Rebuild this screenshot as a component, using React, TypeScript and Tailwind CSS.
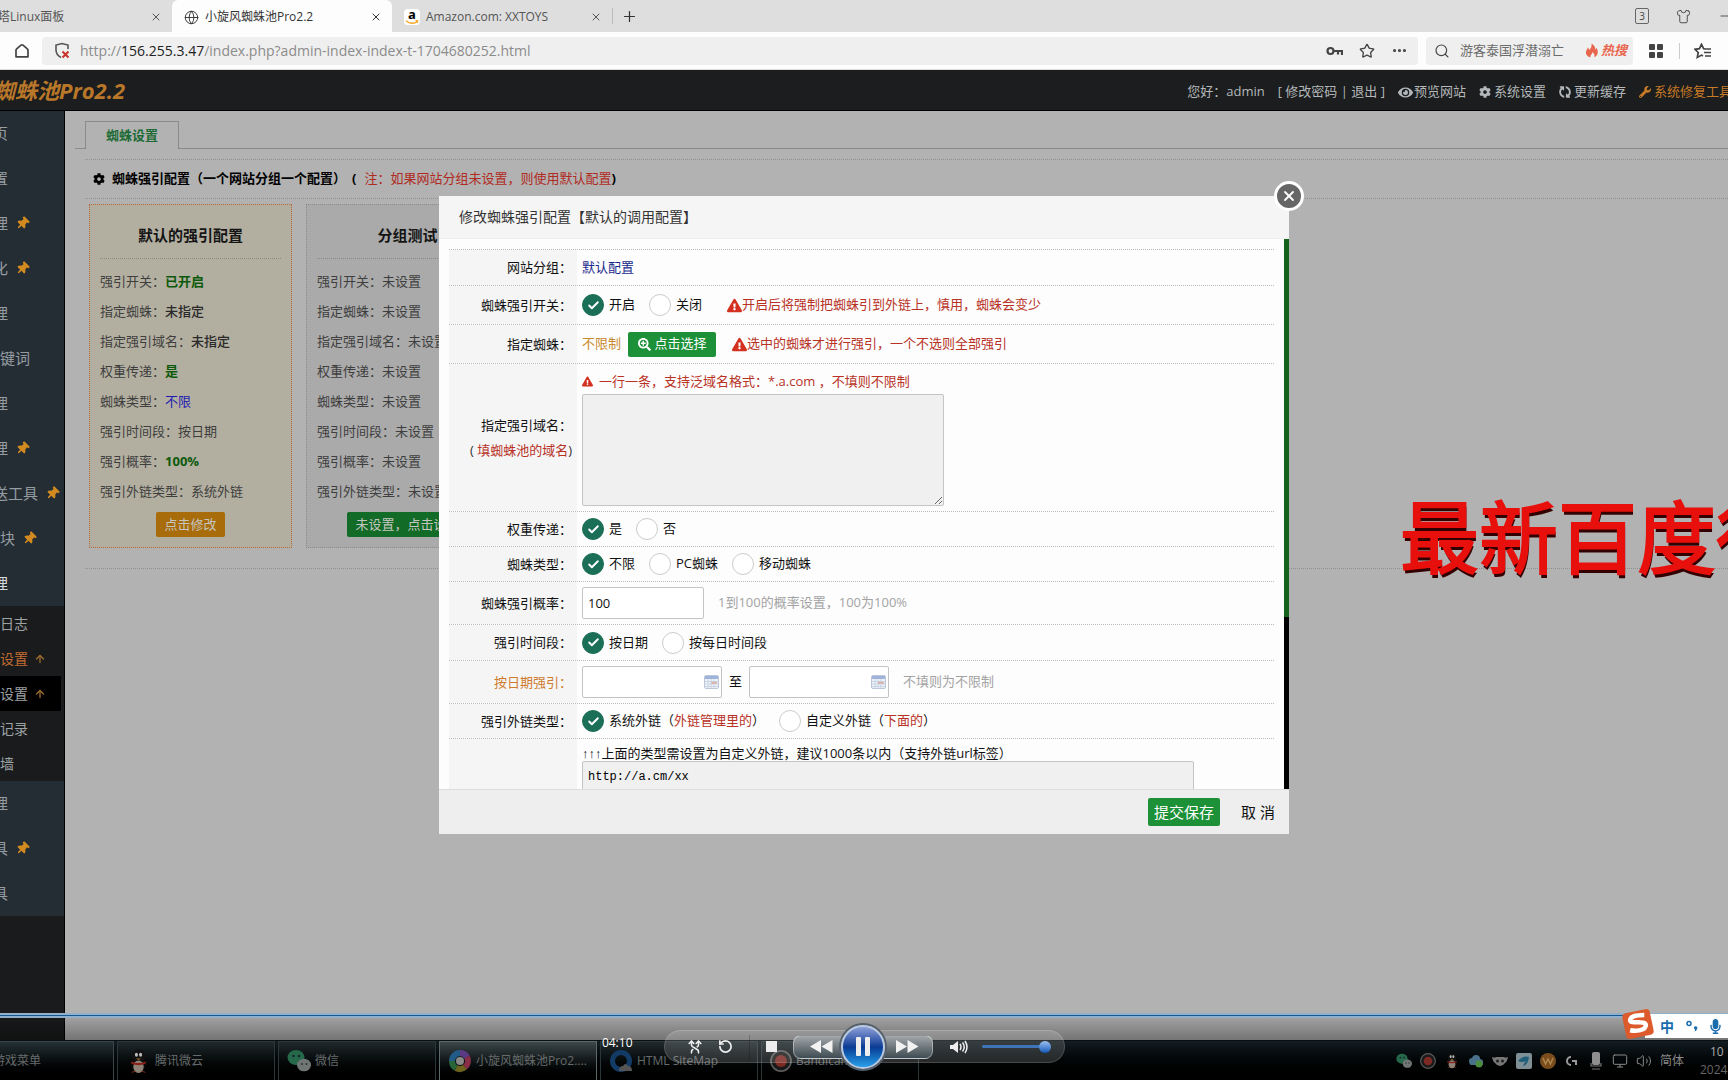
import React from "react";
import {
  FaThumbtack, FaCog, FaEye, FaWrench, FaExclamationTriangle, FaSearchPlus, FaMicrophone, FaSyncAlt,
} from "react-icons/fa";
import {
  X, Plus, Globe, Star, Ellipsis, Search, Shirt, Minus, ArrowUp, Check, Volume2, Monitor, RotateCcw, Shuffle,
} from "lucide-react";

const FONT = "font-['Open_Sans','Noto_Sans_CJK_SC',sans-serif]";

function TabStrip() {
  return (
    <div className="flex h-8 shrink-0 items-stretch bg-[#dedede] text-[12px] text-[#555]">
      <div className="flex w-[172px] items-center justify-between pt-0.5 pr-2.5">
        <span className="-ml-0.5 whitespace-nowrap">塔Linux面板</span>
        <button aria-label="关闭标签"><X size={12} /></button>
      </div>
      <div className="flex w-[220px] items-center rounded-t-md bg-[#fdfdfd] pt-0.5 pr-2.5 pl-3 text-[#333]">
        <Globe size={15} strokeWidth={1.5} />
        <span className="ml-1.5 flex-1 whitespace-nowrap">小旋风蜘蛛池Pro2.2</span>
        <button aria-label="关闭标签"><X size={12} /></button>
      </div>
      <div className="flex w-[220px] items-center pt-0.5 pr-2.5 pl-3">
        <AmazonMark />
        <span className="ml-1.5 flex-1 whitespace-nowrap">Amazon.com: XXTOYS</span>
        <button aria-label="关闭标签"><X size={12} /></button>
      </div>
      <div className="my-2 w-px bg-[#bbb]" />
      <button aria-label="新标签" className="px-2 text-[#333]"><Plus size={17} strokeWidth={1.75} /></button>
      <div className="flex flex-1 items-center justify-end gap-[27px] overflow-hidden text-[#444]">
        <span className="flex h-4 w-[14px] items-center justify-center rounded-xs border border-[#666] text-[10px]">3</span>
        <Shirt size={15} strokeWidth={1.5} />
        <Minus size={14} strokeWidth={1.5} className="-mr-1" />
      </div>
    </div>
  );
}

function AmazonMark() {
  return (
    <span className="relative flex size-4 items-start justify-center rounded-sm bg-white text-black">
      <span className="text-[13px] leading-[11px] font-bold">a</span>
      <svg viewBox="0 0 16 5" className="absolute inset-x-0 bottom-0 h-[5px] w-4">
        <path d="M2 .8c3.500 3.200 8.500 3.200 11.500.4M11.500.6l2.200.2-.5 2" fill="none" stroke="#f5a623" strokeWidth="1.300" />
      </svg>
    </span>
  );
}

function StarList() {
  return (
    <svg width="18" height="16" viewBox="0 0 18 16" fill="none" stroke="#444" strokeWidth="1.700">
      <path d="M11 6 9.600 5.700 7.500 1.300 5.400 5.700.9 6.300l3.300 3.200-.9 4.900 4.200-2.300 1.500.8" />
      <path d="M11 6h6M10 9.500h7M11 13h6" />
    </svg>
  );
}

function AddressBar() {
  return (
    <div className="flex h-[38px] shrink-0 items-center overflow-hidden border-b border-[#ddd] bg-[#fdfdfd] text-[#444]">
      <button aria-label="主页" className="mr-3 ml-[14px] shrink-0">
        <svg width="16" height="16" viewBox="0 0 16 16" fill="none" stroke="#444" strokeWidth="1.700">
          <path d="M2 7.300Q2 6.500 2.700 5.800L7 2.200q1-.8 2 0l4.300 3.600q.7.700.7 1.500v6.500H2z" strokeLinejoin="round" />
        </svg>
      </button>
      <div className="flex h-7 min-w-0 flex-1 items-center rounded bg-[#efefef] pr-2.5 pl-3">
        <svg width="16" height="17" viewBox="0 0 16 17" fill="none">
          <path d="M7 15.500C3.500 13.500 2 11 2 8V3l6-1.500L14 3v4" stroke="#555" strokeWidth="1.600" />
          <path d="m8.500 9.500 6 6m0-6-6 6" stroke="#c8332b" strokeWidth="2" />
        </svg>
        <span className="ml-2.5 flex-1 truncate text-[14px] text-[#8b8b8b]">
          http://<span className="text-[#222]">156.255.3.47</span>/index.php?admin-index-index-t-1704680252.html
        </span>
        <div className="flex items-center gap-4">
          <svg width="17" height="12" viewBox="0 0 17 12" fill="none" stroke="#444" strokeWidth="2.200">
            <circle cx="4.500" cy="6" r="3" /><path d="M7.500 6H16v4M12 6v3.500" />
          </svg>
          <Star size={16} strokeWidth={2} />
          <Ellipsis size={17} strokeWidth={2.5} />
        </div>
      </div>
      <div className="ml-2 flex h-7 w-[207px] shrink-0 items-center rounded bg-[#efefef] pl-2">
        <Search size={16} strokeWidth={1.75} />
        <span className="ml-2.5 flex-1 text-[13px] text-[#6b6b6b]">游客泰国浮潜溺亡</span>
        <span className="mr-1.5 flex items-center text-[13px] font-bold text-[#e8654e] italic">
          <svg width="14" height="15" viewBox="0 0 14 15" className="mr-0.5" fill="#e8654e">
            <path d="M5.500 14.500C2 13.500.3 11 1.200 8c.5-1.500 1.300-2 1.500-3.500 1 .8 1.300 1.500 1.300 2.500C6 5.500 7 3.500 6.500.5 9 2 10.500 4.200 10.300 6.500c.7-.3 1-1 1-1.700 2.200 2.700 2.500 7.700-2.300 9.700 1-1.700.5-3.500-1.500-5.500-.3 2.500-2.500 3-2 5.500z" />
          </svg>
          热搜
        </span>
      </div>
      <div className="mx-4 grid size-[14px] shrink-0 grid-cols-2 gap-0.5">
        {[0, 1, 2, 3].map((i) => <span key={i} className="rounded-[1px] bg-[#444]" />)}
      </div>
      <div className="h-4 w-px shrink-0 bg-[#ccc]" />
      <div className="w-12 shrink-0 pl-[14px]"><StarList /></div>
    </div>
  );
}

function AppHeader() {
  return (
    <header className="flex h-[41px] shrink-0 items-center justify-between overflow-hidden border-b border-black bg-[#1b1d1e] text-[13px] whitespace-nowrap text-[#b4b8ba]">
      <h1 className="-ml-[7px] text-[22px] font-bold text-[#b9772a] italic">蜘蛛池Pro2.2</h1>
      <nav className="-mr-1 flex items-center gap-[13px] pt-1">
        <span>您好：admin</span>
        <span>[ <a href="#pwd">修改密码</a> | <a href="#exit">退出</a> ]</span>
        <a href="#view" className="flex items-center"><FaEye size={15} className="mr-px" />预览网站</a>
        <a href="#set" className="flex items-center gap-[3px]"><FaCog size={12} />系统设置</a>
        <a href="#cache" className="flex items-center gap-[3px]"><FaSyncAlt size={12} className="rotate-90" />更新缓存</a>
        <a href="#fix" className="flex items-center gap-[3px] text-[#c67a26]"><FaWrench size={12} />系统修复工具</a>
      </nav>
    </header>
  );
}

type Item = { t: string; pin?: boolean; full?: boolean; on?: boolean };
const TOP: Item[] = [
  { t: "页" }, { t: "置" }, { t: "理", pin: true }, { t: "化", pin: true }, { t: "理" }, { t: "键词", full: true },
  { t: "理" }, { t: "理", pin: true }, { t: "送工具", pin: true }, { t: "块", pin: true, full: true }, { t: "理", on: true },
];
const BOTTOM: Item[] = [{ t: "理" }, { t: "具", pin: true }, { t: "具" }];

function SideItem({ item }: { item: Item }) {
  return (
    <a href="#menu" className={`flex h-[45px] items-center gap-2 bg-[#252d34] text-[15px] whitespace-nowrap ${item.on ? "text-[#d5dadd]" : "text-[#959da3]"}`}>
      <span className={item.full ? "" : "-ml-[7px]"}>{item.t}</span>
      {item.pin && <FaThumbtack size={13} className="rotate-45 text-[#d38a1f]" />}
    </a>
  );
}

const SUBS = [
  { t: "日志" }, { t: "设置", arrow: true, hot: true }, { t: "设置", arrow: true, on: true }, { t: "记录" }, { t: "墙" },
];

function Sidebar() {
  return (
    <aside className="w-[65px] shrink-0 overflow-hidden border-r border-black bg-[#1a1b1c]">
      {TOP.map((i, k) => <SideItem key={k} item={i} />)}
      {SUBS.map((s, k) => (
        <a key={k} href="#sub" className={`mr-[3px] flex h-[35px] items-center gap-1.5 text-[14px] whitespace-nowrap ${s.on ? "bg-black" : ""} ${s.hot ? "text-[#c06c32]" : "text-[#9da2a4]"}`}>
          {s.t}
          {s.arrow && <ArrowUp size={12} strokeWidth={2.5} className="text-[#a3702c]" />}
        </a>
      ))}
      {BOTTOM.map((i, k) => <SideItem key={k} item={i} />)}
    </aside>
  );
}

type Line = [string, string, string?];
const CARD_A: Line[] = [
  ["强引开关：", "已开启", "font-bold text-[#0b5a0b]"],
  ["指定蜘蛛：", "未指定", "font-medium text-[#2a2a2a]"],
  ["指定强引域名：", "未指定", "font-medium text-[#2a2a2a]"],
  ["权重传递：", "是", "font-bold text-[#0b5a0b]"],
  ["蜘蛛类型：", "不限", "text-[#1c1cb0]"],
  ["强引时间段：", "按日期"],
  ["强引概率：", "100%", "font-bold text-[#0b5a0b]"],
  ["强引外链类型：", "系统外链"],
];
const CARD_B: Line[] = CARD_A.map(([k]) => [k, "未设置"]);

function Card({ title, lines, warm, action }: { title: string; lines: Line[]; warm?: boolean; action: string }) {
  return (
    <section className={`w-[203px] border border-dotted px-2.5 pb-2.5 ${warm ? "border-[#b5663a] bg-[#b3afa0]" : "border-[#8a8a8a] bg-[#aaa]"}`}>
      <h3 className="mb-[7px] h-[54px] border-b border-dotted border-[#888] text-center text-[15px] leading-[60px] font-bold text-[#151515]">{title}</h3>
      {lines.map(([k, v, c], i) => (
        <p key={i} className="text-[13px] leading-[30px] whitespace-nowrap text-[#3e3e3e]">{k}<span className={c}>{v}</span></p>
      ))}
      <div className="mt-[5px] text-center">
        <button className={`h-[25px] rounded-xs px-2 text-[13px] whitespace-nowrap text-[#c6c6c0] ${warm ? "bg-[#a96c0a]" : "bg-[#126b26]"}`}>{action}</button>
      </div>
    </section>
  );
}

function Content() {
  return (
    <main className="min-w-0 flex-1 bg-[#b2b2b2] pt-2.5">
      <div className="flex h-7 pl-2.5">
        <div className="w-2.5 border-b border-[#8a8a8a]" />
        <button className="w-[94px] border border-b-0 border-[#8a8a8a] text-[13px] font-bold text-[#1c6b35]">蜘蛛设置</button>
        <div className="flex-1 border-b border-[#8a8a8a]" />
      </div>
      <div className="mt-2.5 ml-5 border-y border-dotted border-[#909090]">
        <h2 className="flex h-[38px] items-center pl-2 text-[13px] font-bold whitespace-nowrap text-black">
          <FaCog size={12} className="mr-[7px]" />
          蜘蛛强引配置（一个网站分组一个配置）
          <span className="mr-2 ml-1.5">(</span>
          <span className="font-normal text-[#b02a22]">注：如果网站分组未设置，则使用默认配置</span>)
        </h2>
      </div>
      <div className="ml-5 border-b border-dotted border-[#909090] pt-[5px] pb-5">
        <div className="flex gap-3.5 pl-1">
          <Card title="默认的强引配置" lines={CARD_A} warm action="点击修改" />
          <Card title="分组测试" lines={CARD_B} action="未设置，点击设置" />
        </div>
      </div>
    </main>
  );
}

function Radio({ name, on, children }: { name: string; on?: boolean; children: React.ReactNode }) {
  return (
    <label className="mr-3.5 flex items-center gap-[5px]">
      <span className="grid size-[22px] place-items-center">
        <input type="radio" name={name} defaultChecked={on} className="peer col-start-1 row-start-1 size-[22px] appearance-none rounded-full border border-[#ccc] bg-white checked:border-[#1b6f57] checked:bg-[#1b6f57]" />
        <Check size={13} strokeWidth={3.5} className="pointer-events-none col-start-1 row-start-1 text-white opacity-0 peer-checked:opacity-100" />
      </span>
      <span>{children}</span>
    </label>
  );
}

function Row({ label, h, tone, children }: { label: React.ReactNode; h: string; tone?: string; children: React.ReactNode }) {
  return (
    <div className={`flex shrink-0 border-t border-dotted border-[#bbb] ${h}`}>
      <div className={`flex w-32 shrink-0 flex-col items-end justify-center bg-[#f5f5f5] pr-[5px] leading-[25px] whitespace-nowrap ${tone ?? ""}`}>{label}</div>
      <div className="flex min-w-0 flex-1 items-center pl-[5px] whitespace-nowrap">{children}</div>
    </div>
  );
}

function Warn({ children }: { children: React.ReactNode }) {
  return <span className="flex items-center text-[#b83226]"><FaExclamationTriangle size={15} className="text-[#d3301f]" />{children}</span>;
}

function CalendarGlyph() {
  return (
    <svg width="15" height="14" viewBox="0 0 15 14">
      <rect x=".5" y=".5" width="14" height="13" rx="1.500" fill="#eef3fa" stroke="#bcc6d8" />
      <rect x="1" y="1" width="13" height="3" fill="#9fb4d9" />
      <path d="M1 6.500h13M1 9h13M1 11.500h13M4 4v9M7 4v9M10 4v9" stroke="#c2cde0" strokeWidth=".8" />
      <rect x="7.400" y="6.900" width="2.300" height="1.900" fill="#dfa496" /><rect x="10.400" y="6.900" width="2.300" height="1.900" fill="#dfa496" />
    </svg>
  );
}

function DateField({ label }: { label: string }) {
  return (
    <label className="flex h-8 w-[140px] items-center rounded-xs border border-[#c4c4c4] bg-white pr-0.5">
      <input aria-label={label} className="h-full min-w-0 flex-1 px-1.5 outline-none" />
      <CalendarGlyph />
    </label>
  );
}

function Modal() {
  return (
    <div className="absolute inset-x-0 top-[196px] flex justify-center px-4">
      <div role="dialog" aria-label="修改蜘蛛强引配置" className="relative w-full max-w-[850px] bg-[#fdfdfd] text-[13px] text-[#111]">
        <h2 className="h-[43px] border-b border-[#eee] bg-[#f5f5f5] pl-5 text-[14px] leading-[42px] text-[#333]">修改蜘蛛强引配置【默认的调用配置】</h2>
        <button aria-label="关闭" className="absolute -top-[15px] -right-[15px] flex size-[30px] items-center justify-center rounded-full border-[3px] border-white bg-[#666] text-white">
          <X size={16} strokeWidth={2.75} />
        </button>
        <div className="flex h-[550px]">
          <form className="flex min-w-0 flex-1 flex-col overflow-hidden px-2.5 pt-2.5">
            <Row h="h-[36px]" label="网站分组："><span className="text-[#1a2a8c]">默认配置</span></Row>
            <Row h="h-[39px]" label="蜘蛛强引开关：">
              <Radio name="switch" on>开启</Radio><Radio name="switch">关闭</Radio>
              <span className="ml-[11px]"><Warn>开启后将强制把蜘蛛引到外链上，慎用，蜘蛛会变少</Warn></span>
            </Row>
            <Row h="h-[39px]" label="指定蜘蛛：">
              <span className="text-[#c98a2e]">不限制</span>
              <button type="button" className="mr-4 ml-[7px] flex h-[25px] w-[88px] items-center justify-center gap-1 rounded-xs bg-[#1c9138] text-white"><FaSearchPlus size={13} />点击选择</button>
              <Warn>选中的蜘蛛才进行强引，一个不选则全部强引</Warn>
            </Row>
            <Row h="h-[148px]" label={<><span>指定强引域名：</span><span className="text-[#333]">( <span className="text-[#b83226]">填蜘蛛池的域名</span>)</span></>}>
              <div>
                <label htmlFor="domains" className="flex h-6 items-center text-[#b83226]"><FaExclamationTriangle size={11} className="mr-1.5 text-[#d3301f]" />一行一条，支持泛域名格式：*.a.com ，不填则不限制</label>
                <textarea id="domains" className="block h-28 w-[362px] rounded-xs border border-[#c4c4c4] bg-[#f0f0f0] p-1.5" />
              </div>
            </Row>
            <Row h="h-[35px]" label="权重传递："><Radio name="weight" on>是</Radio><Radio name="weight">否</Radio></Row>
            <Row h="h-[35px]" label="蜘蛛类型："><Radio name="kind" on>不限</Radio><Radio name="kind">PC蜘蛛</Radio><Radio name="kind">移动蜘蛛</Radio></Row>
            <Row h="h-[43px]" label="蜘蛛强引概率：">
              <input aria-label="蜘蛛强引概率" defaultValue="100" className="h-8 w-[122px] rounded-xs border border-[#c4c4c4] bg-white px-[5px]" />
              <span className="ml-3.5 text-[#a3a3a3]">1到100的概率设置，100为100%</span>
            </Row>
            <Row h="h-[36px]" label="强引时间段："><Radio name="time" on>按日期</Radio><Radio name="time">按每日时间段</Radio></Row>
            <Row h="h-[43px]" tone="text-[#cf7b2e]" label="按日期强引：">
              <DateField label="开始日期" /><span className="mx-[7px]">至</span><DateField label="结束日期" />
              <span className="ml-3.5 text-[#a3a3a3]">不填则为不限制</span>
            </Row>
            <Row h="h-[35px]" label="强引外链类型：">
              <Radio name="link" on>系统外链（<span className="text-[#b83226]">外链管理里的</span>）</Radio>
              <Radio name="link">自定义外链（<span className="text-[#b83226]">下面的</span>）</Radio>
            </Row>
            <Row h="h-[140px]" label="">
              <div className="self-start pt-1">
                <label htmlFor="links" className="block h-[18px] leading-[20px]">
                  <span className="font-['Liberation_Sans',sans-serif]">↑↑↑</span>上面的类型需设置为自定义外链，建议1000条以内（支持外链url标签）
                </label>
                <textarea id="links" defaultValue="http://a.cm/xx" className="block h-28 w-[612px] rounded-xs border border-[#c4c4c4] bg-[#f0f0f0] px-[5px] py-1.5 font-['Liberation_Mono',monospace] text-[12px] text-black" />
              </div>
            </Row>
          </form>
          <div className="w-[5px] bg-black"><div className="h-[378px] bg-[#15621a]" /></div>
        </div>
        <div className="flex h-[45px] items-center justify-end border-t border-[#ddd] bg-[#eee] pr-3.5 text-[15px]">
          <button className="h-7 w-[72px] rounded-xs bg-[#1c9138] text-white">提交保存</button>
          <button className="ml-[21px]">取 消</button>
        </div>
      </div>
    </div>
  );
}

function Penguin({ size }: { size: number }) {
  return (
    <svg width={size} height={size} viewBox="0 0 24 24">
      <ellipse cx="12" cy="13" rx="8" ry="9" fill="#0a0a0a" /><circle cx="12" cy="7" r="6.500" fill="#111" />
      <ellipse cx="12" cy="17" rx="5" ry="6" fill="#8f8378" />
      <ellipse cx="10" cy="5.500" rx="1.500" ry="2" fill="#bbb" /><ellipse cx="14" cy="5.500" rx="1.500" ry="2" fill="#bbb" />
      <path d="M5 12q7 3 14 0v2q-7 3-14 0z" fill="#8c2018" /><path d="M9.500 9h5L12 10.500z" fill="#a06c1c" />
      <path d="M5 23q1-3 5-1.500zM19 23q-1-3-5-1.500z" fill="#6b2a14" />
    </svg>
  );
}

function WeChat({ size }: { size: number }) {
  return (
    <svg width={size} height={size} viewBox="0 0 24 24">
      <ellipse cx="9" cy="8.500" rx="8.500" ry="7.500" fill="#26694a" /><circle cx="6.500" cy="7" r="1.200" fill="#123" /><circle cx="12" cy="7" r="1.200" fill="#123" />
      <ellipse cx="17" cy="16" rx="7" ry="6.300" fill="#6f7674" /><circle cx="15" cy="15" r="1" fill="#333" /><circle cx="19.500" cy="15" r="1" fill="#333" />
    </svg>
  );
}

function Swirl() {
  return (
    <svg width="24" height="24" viewBox="0 0 24 24" fill="none" strokeWidth="6">
      <path d="M12 4a8 8 0 0 1 7 4" stroke="#5b3a85" /><path d="M19 8a8 8 0 0 1-2 10" stroke="#8a2d49" />
      <path d="M17 18a8 8 0 0 1-9 1" stroke="#6e6420" /><path d="M8 19a8 8 0 0 1-4-7" stroke="#28663a" /><path d="M4 12a8 8 0 0 1 8-8" stroke="#225a88" />
      <circle cx="12" cy="12" r="4" fill="#8a8a8a" />
    </svg>
  );
}

function RecordDot({ size }: { size: number }) {
  return (
    <svg width={size} height={size} viewBox="0 0 24 24"><circle cx="12" cy="12" r="11" fill="#1a1a1a" stroke="#5c5c5c" strokeWidth="1.800" /><circle cx="12" cy="12" r="6.500" fill="#7d2a24" /></svg>
  );
}

const TASKS = [
  { t: "腾讯微云", icon: <Penguin size={25} />, on: false },
  { t: "微信", icon: <WeChat size={24} />, on: false },
  { t: "小旋风蜘蛛池Pro2....", icon: <Swirl />, on: true },
  {
    t: "HTML SiteMap", on: false,
    icon: <svg width="24" height="24" viewBox="0 0 24 24"><circle cx="12" cy="12" r="8.500" fill="none" stroke="#123c66" strokeWidth="5" /><path d="M10 22q0-5 4-5 2-4 5 0 4 0 4 5z" fill="#555" /></svg>,
  },
  { t: "Bandicam", icon: <RecordDot size={22} />, on: false },
];

function Taskbar() {
  return (
    <footer className="absolute inset-x-0 bottom-0 flex h-10 items-stretch justify-between overflow-hidden border-t border-[#0a1012] bg-linear-to-b from-[#131d21] to-black text-[12px] text-[#666b6c]">
      <div className="flex gap-[3px]">
        <button className="flex w-[114px] items-center border-t border-r border-[#39474a] bg-linear-to-b from-[#253135] to-black whitespace-nowrap"><span className="-ml-[7px]">游戏菜单</span></button>
        {TASKS.map((t) => (
          <button key={t.t} className={`flex w-[158px] items-center gap-1 border-x border-t pl-2 whitespace-nowrap ${t.on ? "border-[#5b686a] bg-linear-to-b from-[#3c484a] to-black" : "border-[#2b3638] bg-linear-to-b from-[#202a2d] to-black"}`}>
            {t.icon}{t.t}
          </button>
        ))}
      </div>
      <div className="flex items-center gap-2 pr-0.5 text-[#8a8a8a]">
        <WeChat size={16} />
        <RecordDot size={16} />
        <Penguin size={16} />
        <svg width="16" height="16" viewBox="0 0 16 16"><path d="M1 8q0-3 3-3 1-3 4-3 4 0 4 4 3 0 3 3v3H3q-2-1-2-4z" fill="#49728a" /><circle cx="11" cy="11" r="3.500" fill="#4c8c3d" /></svg>
        <svg width="16" height="16" viewBox="0 0 16 16"><path d="M0 4q3 1 4 0h8q1 1 4 0-1 5-3 6-2 3-5 3T3 10Q1 9 0 4z" fill="#777" /><circle cx="5.500" cy="8" r="1.500" fill="#222" /><circle cx="10.500" cy="8" r="1.500" fill="#222" /></svg>
        <svg width="16" height="16" viewBox="0 0 16 16"><rect width="16" height="16" rx="2" fill="#7f8f96" /><path d="M2 8q5-6 11-4-1 8-6 9 1-3 3-5-4 2-8 0z" fill="#1f5f7c" /></svg>
        <svg width="16" height="16" viewBox="0 0 16 16"><circle cx="8" cy="8" r="8" fill="#7b4d1d" /><path d="m3 5 2.500 6L8 6l2.500 5L13 5" fill="none" stroke="#b18a53" strokeWidth="1.300" /></svg>
        <svg width="16" height="16" viewBox="0 0 16 16" fill="none" stroke="#999" strokeWidth="2"><path d="M7 4a4 4 0 1 0 0 8M8 8h4v4" /></svg>
        <svg width="16" height="18" viewBox="0 0 16 18"><rect x="4" y="0" width="8" height="13" rx="2" fill="#8f8f8f" /><path d="M3 11v3h10v-3M4 17h8" stroke="#777" fill="none" strokeWidth="1.200" /></svg>
        <Monitor size={16} strokeWidth={1.5} />
        <Volume2 size={16} strokeWidth={1.5} />
        <span className="whitespace-nowrap">简体</span>
        <div className="ml-2 w-[26px] text-[12px] leading-[18px]"><div className="pl-2.5 text-[#aaa]">10</div><div className="text-[#666]">2024</div></div>
      </div>
    </footer>
  );
}

function Player() {
  return (
    <div className="absolute inset-x-0 bottom-0 flex h-[67px] flex-col items-center">
      <div className="h-[5px] w-full shrink-0 border-y-2 border-[#8fb0cd] bg-[#17588e]" />
      <div className="relative mt-3 flex h-[33px] w-[401px] items-center rounded-full border border-white/15 bg-white/15 pl-[23px] text-[#ededed]">
        <span className="absolute right-full bottom-2.5 mr-8 text-[12px] text-white">04:10</span>
        <button aria-label="随机播放"><Shuffle size={14} strokeWidth={2.75} className="-rotate-90" /></button>
        <button aria-label="重复" className="ml-4"><RotateCcw size={15} strokeWidth={2.75} /></button>
        <span className="mx-4 h-6 w-px bg-black/20" />
        <button aria-label="停止" className="size-[11px] bg-[#ececec]" />
        <button aria-label="快退" className="ml-4 flex h-6 w-[52px] items-center rounded-l-lg border border-white/40 bg-linear-to-b from-[#a4a8aa] to-[#3f4c53] pl-4">
          <svg width="23" height="13" viewBox="0 0 23 13" fill="#f2f2f2"><path d="M11 0v13L0 6.500zM22.500 0v13l-11-6.500z" /></svg>
        </button>
        <button aria-label="暂停" className="z-10 -mx-1 flex size-11 shrink-0 items-center justify-center gap-1 rounded-full border-2 border-[#b9c9df] bg-linear-to-b from-[#8d9fd8] via-[#0b3a94] to-[#2aa0ea] shadow-[0_0_0_2px_#56606c]">
          <span className="h-[19px] w-[5px] rounded-[1px] bg-[#eee]" /><span className="h-[19px] w-[5px] rounded-[1px] bg-[#eee]" />
        </button>
        <button aria-label="快进" className="flex h-6 w-[52px] items-center rounded-r-lg border border-white/40 bg-linear-to-b from-[#a4a8aa] to-[#3f4c53] pl-3.5">
          <svg width="23" height="13" viewBox="0 0 23 13" fill="#f2f2f2"><path d="M0 0v13l11-6.500zM11.500 0v13l11-6.500z" /></svg>
        </button>
        <button aria-label="音量" className="ml-[17px]">
          <svg width="18" height="14" viewBox="0 0 18 14" fill="none" stroke="#eee" strokeWidth="1.500"><path d="M0 5h3l5-4v12L3 9H0z" fill="#eee" stroke="none" /><path d="M10 4q2 3 0 6M12.500 2.500q3.500 4.500 0 9M15 1q4 6 0 12" /></svg>
        </button>
        <label className="ml-3.5 flex"><input type="range" aria-label="音量大小" defaultValue={100} className="h-[3px] w-[69px] appearance-none rounded bg-[#3f74b8] [&::-webkit-slider-thumb]:size-[12px] [&::-webkit-slider-thumb]:appearance-none [&::-webkit-slider-thumb]:rounded-full [&::-webkit-slider-thumb]:bg-linear-to-b [&::-webkit-slider-thumb]:from-[#9cc0ee] [&::-webkit-slider-thumb]:to-[#0a58b8]" /></label>
      </div>
    </div>
  );
}

function ImeBar() {
  return (
    <div className="absolute right-0 bottom-[42px] flex h-6 w-[83px] items-center bg-white text-[#1a6dad]">
      <svg width="34" height="32" viewBox="0 0 34 32" className="-mt-1 -ml-6 shrink-0">
        <g transform="rotate(-12 17 16)"><rect x="3" y="3" width="28" height="26" rx="4" fill="#dc5a2c" />
          <path d="M25 8.500q-14-3-15 2.500c0 4 15 2.500 14.500 7.500-1 5.500-11 4.500-16.500 2" fill="none" stroke="#fff" strokeWidth="4.500" /></g>
      </svg>
      <span className="ml-[5px] text-[14px] font-bold">中</span>
      <svg width="12" height="12" viewBox="0 0 12 12" className="ml-3"><circle cx="3" cy="3.500" r="2" fill="none" stroke="#1a6dad" strokeWidth="1.500" /><path d="M8 7.500a1.700 1.700 0 1 1 3 1.500q-.5 2-2.500 2.500.8-1 .5-2A1.700 1.700 0 0 1 8 7.500z" fill="#1a6dad" /></svg>
      <FaMicrophone size={15} className="ml-2.5" />
    </div>
  );
}

export default function App() {
  return (
    <div className={`relative flex h-screen w-full flex-col overflow-hidden ${FONT}`}>
      <TabStrip />
      <AddressBar />
      <AppHeader />
      <div className="flex min-h-0 flex-1"><Sidebar /><Content /></div>
      <div className="pointer-events-none absolute top-[478px] right-0 w-[328px] overflow-hidden text-[79px] leading-[120px] whitespace-nowrap text-[#e8100c] [-webkit-text-stroke:2px_#e8100c] [text-shadow:1px_4px_0_#300]">最新百度得</div>
      <Modal />
      <div className="absolute inset-x-0 bottom-10 h-[22px] bg-linear-to-b from-black/10 to-black/35" />
      <Taskbar />
      <Player />
      <ImeBar />
    </div>
  );
}
